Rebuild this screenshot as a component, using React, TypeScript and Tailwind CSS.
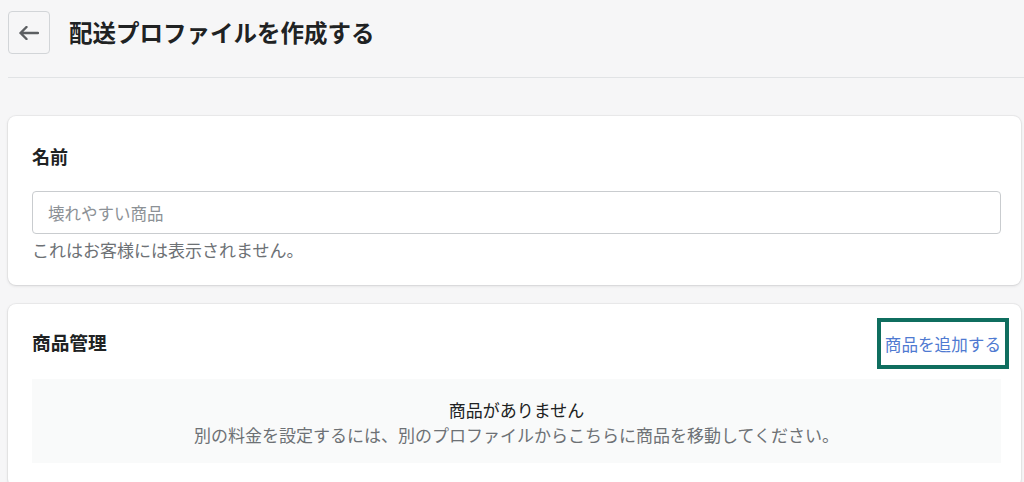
const font = { fontFamily: '"Noto Sans CJK JP", "Noto Sans", sans-serif' }

export default function App() {
  return (
    <div className="min-h-screen bg-[#f6f6f7] text-[#202223]" style={font}>
      {/* Header */}
      <div className="ml-2 flex h-[78px] items-start gap-[19px] border-b border-[#e1e3e5] pt-[11px]">
        <button className="flex h-[43px] w-[42px] items-center justify-center rounded-[4px] border border-[#d2d5d8] bg-[#f6f6f7] text-[#5c5f62]">
          <svg width="20" height="14" viewBox="0 0 20 14" fill="none" stroke="currentColor" strokeWidth="2.4" strokeLinecap="round" strokeLinejoin="round">
            <path d="M19 7H1.5M7.5 1L1.5 7l6 6" />
          </svg>
        </button>
        <h1 className="mt-[4px] text-[23.5px] font-bold leading-[34px]">配送プロファイルを作成する</h1>
      </div>

      <div className="ml-2 mr-[3px] mt-[38px] flex flex-col gap-[19px]">
        {/* Name card */}
        <div className="rounded-lg bg-white pb-6 pl-6 pr-5 pt-7 shadow-[0_0_0_1px_rgba(63,63,68,0.05),0_1px_3px_rgba(63,63,68,0.15)]">
          <h2 className="text-[18px] font-bold leading-6">名前</h2>
          <input
            className="mt-[23px] block h-[43px] w-full rounded-[4px] border border-[#c9cccf] px-[15px] text-[16.5px] placeholder:text-[#8c9196] outline-none"
            placeholder="壊れやすい商品"
          />
          <p className="mt-[5px] text-[17px] leading-[22px] text-[#6d7175]">これはお客様には表示されません。</p>
        </div>

        {/* Products card */}
        <div className="rounded-lg bg-white pb-6 pl-6 pr-5 pt-[14px] shadow-[0_0_0_1px_rgba(63,63,68,0.05),0_1px_3px_rgba(63,63,68,0.15)]">
          <div className="flex items-center justify-between">
            <h2 className="mt-[-3px] text-[18.7px] font-bold leading-6">商品管理</h2>
            <div className="-mr-2 flex h-[51px] items-center border-4 border-[#0f6e5f] px-[4px]">
              <a className="text-[16.6px] leading-6 text-[#4f7ad1]">商品を追加する</a>
            </div>
          </div>
          <div className="mt-[10px] flex h-[84px] flex-col items-center justify-center bg-[#f9fafa] pt-[2px] text-[17px] leading-[25px]">
            <p>商品がありません</p>
            <p className="text-[#6d7175]">別の料金を設定するには、別のプロファイルからこちらに商品を移動してください。</p>
          </div>
        </div>
      </div>
    </div>
  )
}
